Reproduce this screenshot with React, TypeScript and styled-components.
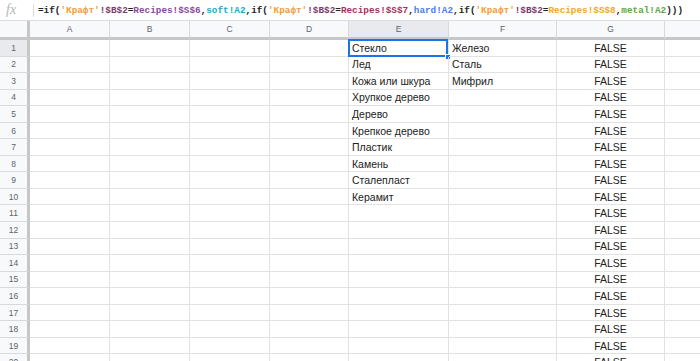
import styled, { createGlobalStyle } from 'styled-components';

const COLUMNS = [
  { key: 'A', width: 80 },
  { key: 'B', width: 80 },
  { key: 'C', width: 80 },
  { key: 'D', width: 79 },
  { key: 'E', width: 100 },
  { key: 'F', width: 108 },
  { key: 'G', width: 108 },
  { key: 'H', width: 100 },
];

const COL_E = ['Стекло', 'Лед', 'Кожа или шкура', 'Хрупкое дерево', 'Дерево', 'Крепкое дерево', 'Пластик', 'Камень', 'Сталепласт', 'Керамит'];
const COL_F = ['Железо', 'Сталь', 'Мифрил'];
const ROW_COUNT = 21;

const FORMULA: { text: string; color: string }[] = [
  { text: '=if(', color: '#222' },
  { text: "'Крафт'", color: '#f39a45' },
  { text: '!$B$2', color: '#7a3a6a' },
  { text: '=', color: '#222' },
  { text: 'Recipes!$S$6', color: '#8a4a9e' },
  { text: ',', color: '#222' },
  { text: 'soft!A2', color: '#1ea6cc' },
  { text: ',if(', color: '#222' },
  { text: "'Крафт'", color: '#f39a45' },
  { text: '!$B$2', color: '#7a3a6a' },
  { text: '=', color: '#222' },
  { text: 'Recipes!$S$7', color: '#a3345c' },
  { text: ',', color: '#222' },
  { text: 'hard!A2', color: '#4a80e6' },
  { text: ',if(', color: '#222' },
  { text: "'Крафт'", color: '#f39a45' },
  { text: '!$B$2', color: '#7a3a6a' },
  { text: '=', color: '#222' },
  { text: 'Recipes!$S$8', color: '#f2a928' },
  { text: ',', color: '#222' },
  { text: 'metal!A2', color: '#5da84a' },
  { text: ')))', color: '#222' },
];

const GlobalStyle = createGlobalStyle`
  html, body {
    margin: 0;
    padding: 0;
    background: #fff;
    overflow: hidden;
  }
  * {
    box-sizing: border-box;
  }
`;

function App() {
  const cellValue = (col: string, row: number) => {
    if (col === 'E') return COL_E[row] || '';
    if (col === 'F') return COL_F[row] || '';
    if (col === 'G') return 'FALSE';
    return '';
  };

  return (
    <>
      <GlobalStyle />
      <Styled.Root>
        <Styled.FormulaBar>
          <Styled.Fx>fx</Styled.Fx>
          <Styled.Divider />
          <Styled.Formula>
            {FORMULA.map((part, index) => (
              // eslint-disable-next-line react/no-array-index-key
              <span key={index} style={{ color: part.color }}>
                {part.text}
              </span>
            ))}
          </Styled.Formula>
        </Styled.FormulaBar>
        <Styled.Grid>
          <Styled.Corner />
          {COLUMNS.map(({ key }) => (
            <Styled.ColHeader key={key} $active={key === 'E'}>
              {key}
            </Styled.ColHeader>
          ))}
          {Array.from(Array(ROW_COUNT), (_, row) => (
            <Styled.Row key={row}>
              <Styled.RowHeader $active={row === 0}>{row + 1}</Styled.RowHeader>
              {COLUMNS.map(({ key }) => (
                <Styled.Cell key={key} $align={key === 'G' ? 'center' : 'left'}>
                  {cellValue(key, row)}
                  {row === 0 && key === 'E' && (
                    <>
                      <Styled.Selection />
                      <Styled.Handle />
                    </>
                  )}
                </Styled.Cell>
              ))}
            </Styled.Row>
          ))}
        </Styled.Grid>
      </Styled.Root>
    </>
  );
}

const Styled = {
  Root: styled.main`
    width: 700px;
    height: 361px;
    overflow: hidden;
    font-family: 'Liberation Sans', Arial, sans-serif;
  `,
  FormulaBar: styled.div`
    display: flex;
    align-items: center;
    height: 21px;
    border-bottom: 1px solid #dadce0;
    white-space: nowrap;
    overflow: hidden;
  `,
  Fx: styled.span`
    width: 28px;
    padding-left: 6px;
    font-family: 'Liberation Serif', 'Times New Roman', serif;
    font-style: italic;
    font-size: 14px;
    color: #b6b6b6;
  `,
  Divider: styled.span`
    width: 1px;
    height: 13px;
    margin: 0 4px 0 5px;
    background: #dadce0;
  `,
  Formula: styled.span`
    font-family: 'Liberation Mono', 'DejaVu Sans Mono', monospace;
    font-size: 9.35px;
    font-weight: 600;
  `,
  Grid: styled.div`
    display: grid;
    grid-template-columns: 30px ${COLUMNS.map((c) => `${c.width}px`).join(' ')};
    grid-template-rows: 19px;
    grid-auto-rows: 16.55px;
  `,
  Row: styled.div`
    display: contents;
  `,
  Corner: styled.div`
    background: #f8f9fa;
    border-right: 3px solid #c7c7c7;
    border-bottom: 3px solid #c7c7c7;
  `,
  ColHeader: styled.div<{ $active?: boolean }>`
    display: flex;
    align-items: center;
    justify-content: center;
    background: ${({ $active }) => ($active ? '#e8eaed' : '#f8f9fa')};
    border-right: 1px solid #d9d9d9;
    border-bottom: 3px solid #c7c7c7;
    font-size: 8.5px;
    color: #5f6368;
  `,
  RowHeader: styled.div<{ $active?: boolean }>`
    display: flex;
    align-items: center;
    justify-content: center;
    background: ${({ $active }) => ($active ? '#e8eaed' : '#f8f9fa')};
    border-right: 3px solid #c7c7c7;
    border-bottom: 1px solid #d9d9d9;
    font-size: 8.5px;
    color: #5f6368;
  `,
  Cell: styled.div<{ $align: 'left' | 'center' }>`
    position: relative;
    display: flex;
    align-items: center;
    justify-content: ${({ $align }) => ($align === 'center' ? 'center' : 'flex-start')};
    padding: 0 3px;
    border-right: 1px solid #e2e2e2;
    border-bottom: 1px solid #e2e2e2;
    font-size: 10.5px;
    color: #222;
    white-space: nowrap;
  `,
  Selection: styled.div`
    position: absolute;
    inset: -1px 0 -1px -1px;
    border: 2px solid #1a73e8;
    pointer-events: none;
  `,
  Handle: styled.div`
    position: absolute;
    right: -3px;
    bottom: -4px;
    width: 6px;
    height: 6px;
    background: #1a73e8;
    border: 1px solid #fff;
  `,
};

export default App;
